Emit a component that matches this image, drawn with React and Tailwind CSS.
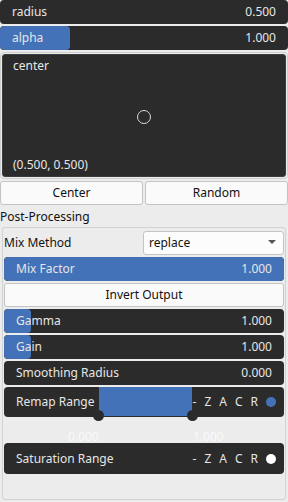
import React from "react";

const font = { fontFamily: '"Noto Sans", "Open Sans", sans-serif' };

const Slider = ({ label, value, fill }) => (
  <div className="relative h-6 rounded-[4px] bg-[#2b2b2b] overflow-hidden">
    {fill && (
      <div
        className="absolute left-0 top-0 bottom-0 rounded-[4px] bg-[#4472b8]"
        style={{ width: fill }}
      />
    )}
    <div className="relative flex h-full items-center justify-between px-3 text-[12px] text-[#e6e6e6]">
      <span>{label}</span>
      <span>{value}</span>
    </div>
  </div>
);

const RangeTools = ({ dot }) => (
  <div className="flex items-center gap-[8px] text-[12px] text-[#e6e6e6]">
    <span>-</span>
    <span>Z</span>
    <span>A</span>
    <span>C</span>
    <span>R</span>
    <span className={`h-[10px] w-[10px] rounded-full ${dot}`} />
  </div>
);

export default function App() {
  return (
    <div className="h-[502px] w-[288px] bg-[#ececec] text-[12px]" style={font}>
      {/* top sliders */}
      <div className="flex flex-col gap-[2px]">
        <Slider label="radius" value="0.500" />
        <Slider label="alpha" value="1.000" fill="70px" />
      </div>

      {/* center picker */}
      <div className="mt-[2px] rounded-[4px] border border-[#cfcfcf] p-px">
        <div className="relative flex h-[123px] flex-col justify-between rounded-[3px] border border-[#3d3d3d] bg-[#2b2b2b] px-[10px] py-[2px] text-[#e6e6e6]">
          <span>center</span>
          <span>(0.500, 0.500)</span>
          <div className="absolute left-[134px] top-[55px] h-[14px] w-[14px] rounded-full border border-[#d8d8d8]" />
        </div>
      </div>

      {/* buttons */}
      <div className="mt-[2px] grid grid-cols-2 gap-[2px]">
        <button className="h-6 rounded-[3px] border border-[#c4c4c4] bg-[#fafafa] text-[#111]">
          Center
        </button>
        <button className="h-6 rounded-[3px] border border-[#c4c4c4] bg-[#fafafa] text-[#111]">
          Random
        </button>
      </div>

      <div className="mt-[1px] h-[21px] leading-[21px] text-[#111]">Post-Processing</div>

      {/* group */}
      <div className="mx-[2px] h-[273px] rounded-[3px] border border-[#d2d2d2] px-px pt-[2px]">
        <div className="flex h-[25px] items-center justify-between">
          <span className="text-[#111]">Mix Method</span>
          <div className="flex h-6 w-[141px] items-center justify-between rounded-[3px] border border-[#c4c4c4] bg-[#fcfcfc] pl-[5px] pr-[7px] text-[#111]">
            <span>replace</span>
            <svg width="8" height="5" viewBox="0 0 8 5">
              <path d="M0 0 L8 0 L4 4 Z" fill="#555" />
            </svg>
          </div>
        </div>

        <div className="mt-[2px] flex flex-col gap-[2px]">
          <Slider label="Mix Factor" value="1.000" fill="100%" />
          <button className="h-6 rounded-[3px] border border-[#c4c4c4] bg-[#fafafa] text-[#111]">
            Invert Output
          </button>
          <Slider label="Gamma" value="1.000" fill="27px" />
          <Slider label="Gain" value="1.000" fill="27px" />
          <Slider label="Smoothing Radius" value="0.000" />
        </div>

        {/* remap range */}
        <div className="relative mt-[2px] flex h-[30px] items-center justify-between rounded-[4px] bg-[#2b2b2b] pl-3 pr-[8px]">
          <div className="absolute left-[95px] top-0 h-[29px] w-[93px] bg-[#4472b8]" />
          <span className="relative text-[#e6e6e6]">Remap Range</span>
          <div className="relative">
            <RangeTools dot="bg-[#4472b8]" />
          </div>
          <div className="absolute left-[89px] top-[23px] h-[11px] w-[11px] rounded-full bg-[#2b2b2b]" />
          <div className="absolute left-[183px] top-[23px] h-[11px] w-[11px] rounded-full bg-[#2b2b2b]" />
        </div>

        <div className="relative h-[26px] text-[12px] text-[#fafafa]">
          <span className="absolute left-[64px] top-[11px]">0.000</span>
          <span className="absolute left-[189px] top-[11px]">1.000</span>
        </div>

        <div className="flex h-[31px] items-center justify-between rounded-[4px] bg-[#2b2b2b] pl-3 pr-[8px]">
          <span className="text-[#e6e6e6]">Saturation Range</span>
          <RangeTools dot="bg-white" />
        </div>
      </div>
    </div>
  );
}
